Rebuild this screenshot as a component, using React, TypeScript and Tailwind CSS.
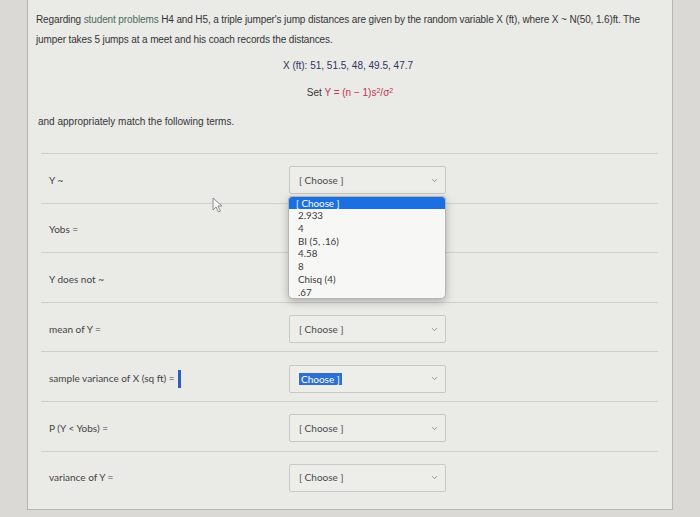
import React from "react";
import { ChevronDown } from "lucide-react";

const rows = [
  "Y ~",
  "Yobs =",
  "Y does not ~",
  "mean of Y =",
  "sample variance of X (sq ft) =",
  "P (Y < Yobs) =",
  "variance of Y =",
];

const options = ["2.933", "4", "BI (5, .16)", "4.58", "8", "Chisq (4)", ".67"];

function Select({ selected }: { selected?: boolean }) {
  return (
    <div className="w-[157px] h-[28px] border border-[#c8c8c4] bg-[#ededea] rounded-[2px] flex items-center justify-between pl-[9px] pr-[6px]">
      {selected ? (
        <span className="bg-[#2e6fd2] text-white px-[2px] leading-[12px] text-[10px]">Choose ]</span>
      ) : (
        <span className="text-[10px] text-[#4a4a4a]">[ Choose ]</span>
      )}
      <ChevronDown size={9} strokeWidth={2} className="text-[#7a7a7a]" />
    </div>
  );
}

export default function App() {
  return (
    <div
      className="w-[700px] h-[517px] bg-[#dad9d6] overflow-hidden relative"
      style={{ fontFamily: "Lato, 'Liberation Sans', sans-serif" }}
    >
      <div className="ml-[27px] w-[646px] h-[510px] bg-[#eaeae7] border-l border-r border-b border-[#b5b5b1] relative">
        <div
          className="pl-[8px] pr-[4px] pt-[10px] text-[10px] leading-[20px] text-[#353535]"
          style={{ fontFamily: "'Liberation Sans', Arial, sans-serif" }}
        >
          <p className="tracking-[-0.12px]">
            Regarding <span className="text-[#4d6a5e]">student problems</span> H4 and H5, a triple jumper's jump distances are given by the random variable X (ft), where X ~ N(50, 1.6)ft. The jumper takes 5 jumps at a meet and his coach records the distances.
          </p>
          <p className="mt-[6px] text-center pr-[8px] text-[#2c3560]">X (ft): 51, 51.5, 48, 49.5, 47.7</p>
          <p className="mt-[7px] text-center pr-[4px]">
            Set <span className="text-[#c2344e]">Y = (n − 1)s<sup className="text-[7px]">2</sup>/σ<sup className="text-[7px]">2</sup></span>
          </p>
          <p className="mt-[9px] pl-[2px]">and appropriately match the following terms.</p>
        </div>

        <div className="ml-[13px] w-[617px] mt-[21px] relative">
          {rows.map((label, i) => (
            <div
              key={label}
              className="h-[49.6px] border-t border-[#cfcfcb] flex items-center pt-[4px]"
            >
              <div className="w-[248px] pl-[8px] text-[10px] text-[#444]">
                {label}
                {i === 4 && (
                  <span className="inline-block align-middle ml-[3px] w-[3px] h-[18px] bg-[#2b5fbd]" />
                )}
              </div>
              <Select selected={i === 4} />
            </div>
          ))}

          <div className="absolute left-[247px] top-[43px] w-[158px] h-[103px] bg-[#f7f7f5] border border-[#b4b4b4] rounded-b-[5px] rounded-t-[3px] shadow-[0_3px_8px_rgba(0,0,0,0.25)] overflow-hidden text-[9.8px] text-[#3a3a3a]">
            <div className="h-[12px] leading-[12px] bg-[#1c6fe0] text-white pl-[7px] rounded-t-[3px]">[ Choose ]</div>
            {options.map((o) => (
              <div key={o} className="h-[12.8px] leading-[12.8px] pl-[9px]">
                {o}
              </div>
            ))}
          </div>

          <svg
            className="absolute left-[171px] top-[44px]"
            width="11"
            height="16"
            viewBox="0 0 11 16"
          >
            <path
              d="M1 1 L1 13 L4 10 L6.5 15 L8.5 14 L6 9 L10 9 Z"
              fill="#f4f4f2"
              stroke="#8d8d8d"
              strokeWidth="1"
              strokeLinejoin="round"
            />
          </svg>
        </div>
      </div>
    </div>
  );
}
